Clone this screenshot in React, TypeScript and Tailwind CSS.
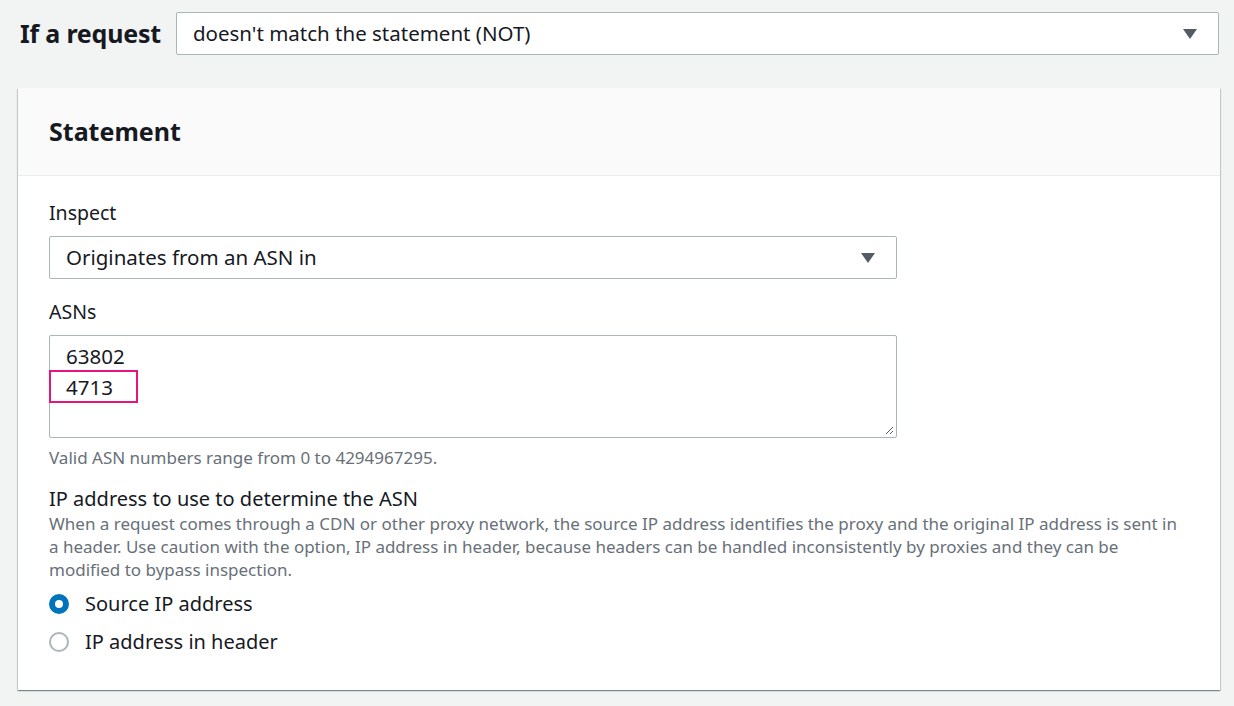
export default function App() {
  const font = { fontFamily: '"Noto Sans", "Open Sans", sans-serif' }
  return (
    <div className="w-[1234px] h-[706px] bg-[#f2f3f3] overflow-hidden text-[#16191f]" style={font}>
      <div className="flex items-center pt-[12px] pl-[20px] pr-[15px] gap-[15px]">
        <div className="text-[25px] font-bold leading-none tracking-[-0.2px]">If a request</div>
        <div className="flex-1 h-[43px] bg-white border border-[#aab7b8] rounded-[2px] flex items-center justify-between pl-[16px] pr-[20px]">
          <span className="text-[20.5px]">doesn't match the statement (NOT)</span>
          <Caret />
        </div>
      </div>
      <div className="mt-[33px] ml-[18px] w-[1202px] h-[602px] bg-white shadow-[0_1px_1px_0_rgba(0,28,36,0.3),1px_1px_1px_0_rgba(0,28,36,0.15),-1px_1px_1px_0_rgba(0,28,36,0.15)]">
        <div className="h-[88px] bg-[#fafafa] border-b border-[#eaeded] flex items-center pl-[31px]">
          <h2 className="text-[25px] font-bold">Statement</h2>
        </div>
        <div className="pl-[31px] pr-[323px] pt-[24px]">
          <div className="text-[19.5px] leading-[26px]">Inspect</div>
          <div className="mt-[10px] h-[43px] border border-[#aab7b8] rounded-[2px] flex items-center justify-between pl-[16px] pr-[20px]">
            <span className="text-[20.5px]">Originates from an ASN in</span>
            <Caret />
          </div>
          <div className="mt-[20px] text-[19.5px] leading-[26px]">ASNs</div>
          <div className="relative mt-[10px] h-[103px] border border-[#aab7b8] rounded-[2px] pl-[16px] pt-[5px] text-[20.5px] leading-[31px]">
            <div>63802</div>
            <div className="relative">
              4713
              <div className="absolute left-[-17px] top-[-2px] w-[89px] h-[33px] border-2 border-[#e7157b]" />
            </div>
            <svg className="absolute right-[2px] bottom-[2px]" width="10" height="10" viewBox="0 0 10 10">
              <path d="M9 2L2 9M9 6L6 9" stroke="#545b64" strokeWidth="1" />
            </svg>
          </div>
          <div className="mt-[8px] text-[17px] text-[#687078] leading-[24px]">Valid ASN numbers range from 0 to 4294967295.</div>
        </div>
        <div className="pl-[31px] pr-[40px] pt-[16px]">
          <div className="text-[20px] leading-[26px]">IP address to use to determine the ASN</div>
          <div className="text-[17px] leading-[23px] text-[#687078]">
            When a request comes through a CDN or other proxy network, the source IP address identifies the proxy and the original IP address is sent in a header. Use caution with the option, IP address in header, because headers can be handled inconsistently by proxies and they can be modified to bypass inspection.
          </div>
          <div className="mt-[10px] flex items-center gap-[16px] text-[20px] h-[26px]">
            <span className="w-[20px] h-[20px] rounded-full border-[6px] border-[#0073bb] bg-white" />
            Source IP address
          </div>
          <div className="mt-[12px] flex items-center gap-[16px] text-[20px] h-[26px]">
            <span className="w-[20px] h-[20px] rounded-full border-2 border-[#aab7b8] bg-white" />
            IP address in header
          </div>
        </div>
      </div>
    </div>
  )
}

function Caret() {
  return (
    <svg width="16" height="12" viewBox="0 0 16 12">
      <path d="M1 1h14L8 11z" fill="#545b64" />
    </svg>
  )
}
